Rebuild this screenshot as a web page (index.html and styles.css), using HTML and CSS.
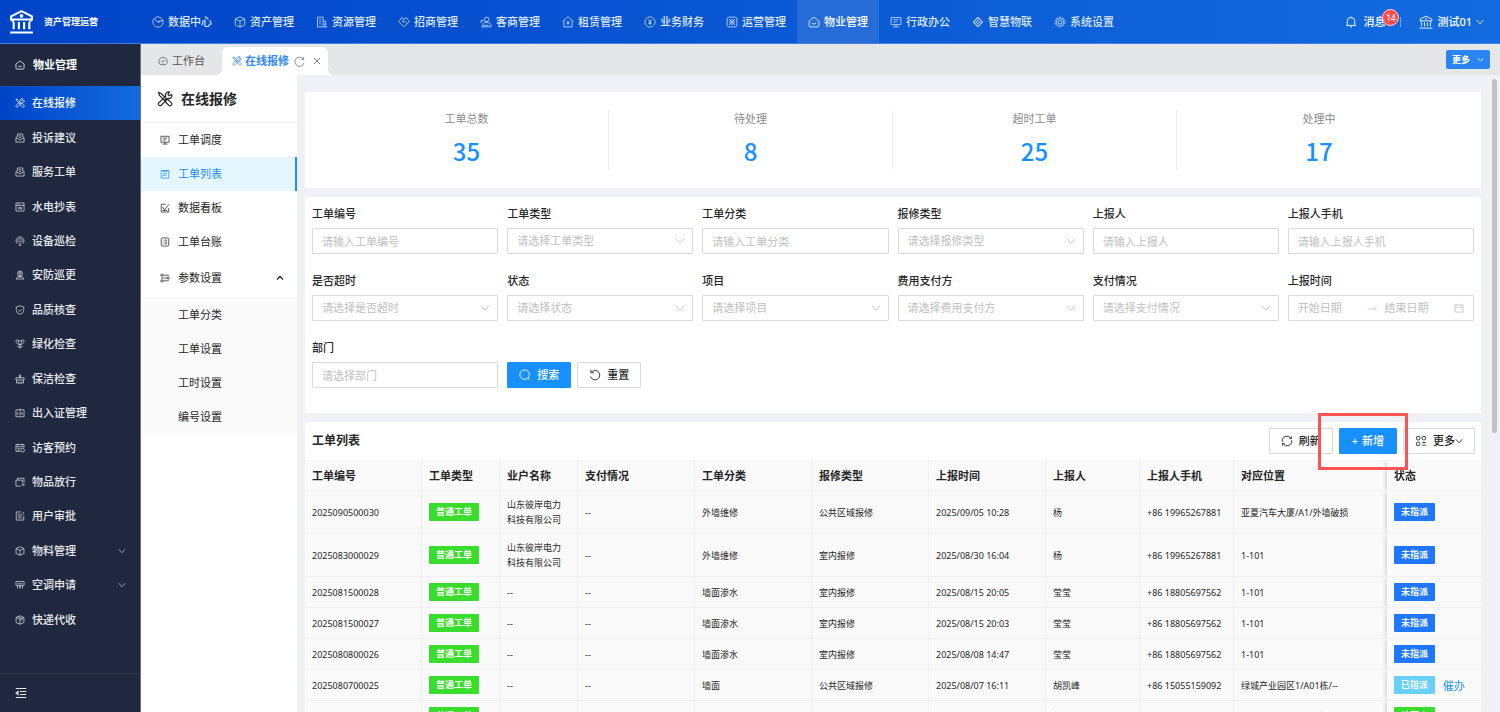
FILE: index.html
```html
<!DOCTYPE html>
<html lang="zh-CN">
<head>
<meta charset="utf-8">
<meta name="viewport" content="width=device-width, initial-scale=1">
<title>资产管理运营 - 在线报修</title>
<link rel="stylesheet" href="styles.css">
</head>
<body>
<svg class="sprite" aria-hidden="true">
  <symbol id="i-bank" viewBox="0 0 24 24"><path d="M12 2 2 7v3h20V7z"/><circle cx="12" cy="6.500" r=".8"/><path d="M3.500 10v2.500M20.500 10v2.500M4.500 12.500v7M9.500 12.500v7M14.500 12.500v7M19.500 12.500v7M1 22.500h22"/></symbol>
  <symbol id="i-pie" viewBox="0 0 16 16"><circle cx="8" cy="8" r="6.800"/><path d="M3 3.500 8 8.500l6.500-3M8 8.500l3-3"/></symbol>
  <symbol id="i-cube" viewBox="0 0 16 16"><path d="M8 1.200 14.300 4v8L8 14.800 1.700 12V4zM1.700 4 8 7l6.300-3M8 7v7.800"/></symbol>
  <symbol id="i-parcel" viewBox="0 0 16 16"><path d="M8 1.200 14.300 4v8L8 14.800 1.700 12V4zM1.700 4 8 7l6.300-3M8 7v7.800M4.800 2.600 11 5.600v3.500"/></symbol>
  <symbol id="i-building" viewBox="0 0 16 16"><path d="M2 14.500v-13h7.500v13M9.500 7H13v7.500M1 14.500h14M4 4.500h3M4 7.500h3M4 10.500h3M11.500 10v2"/></symbol>
  <symbol id="i-tag" viewBox="0 0 16 16"><path d="m8 14.500-7-7L5 2l3 2.500L11 2l4 5.500zM8 4.500 5.500 7 7 8.500l2-1.500 3 3"/></symbol>
  <symbol id="i-client" viewBox="0 0 16 16"><circle cx="9" cy="4.500" r="3"/><path d="M1.500 14.500h13V11L11 8.500H6L3.500 11v1.500h8M1.500 9.500V6H5"/></symbol>
  <symbol id="i-rent" viewBox="0 0 16 16"><path d="M1 7 8 1l7 6M2.500 6v8.500h11V6M6 6.500l2 2 2-2M8 8.500V12M6 9.500h4"/></symbol>
  <symbol id="i-coin" viewBox="0 0 16 16"><circle cx="8" cy="8" r="6.800"/><path d="m5.800 4.500 2.200 3 2.200-3M8 7.500V12M6 8h4M6 10h4"/></symbol>
  <symbol id="i-ops" viewBox="0 0 16 16"><path d="M5 1.500H3L1.500 3v10L3 14.500h10l1.500-1.500V3L13 1.500H5M4 4l8 8M12 4l-8 8"/><circle cx="8" cy="8" r="3"/></symbol>
  <symbol id="i-home" viewBox="0 0 16 16"><path d="M8 1.500 1.500 6.500V13q0 1.500 1.500 1.500h10q1.500 0 1.500-1.500V6.500zM5 9.500q3 3 6 0"/></symbol>
  <symbol id="i-screen" viewBox="0 0 16 16"><path d="M1.500 2h13v9.500h-13zM8 11.500v3M4 14.500h8M4.500 5h7M4.500 8h5"/></symbol>
  <symbol id="i-atom" viewBox="0 0 16 16"><circle cx="8" cy="8" r="2"/><path d="M5 4.500Q8-1 11 4.500M5 11.500Q8 17 11 11.500M4.500 5.500Q-1 8 4.500 10.500M11.500 5.500Q17 8 11.500 10.500"/><circle cx="8" cy="8" r="4.600"/></symbol>
  <symbol id="i-gear" viewBox="0 0 16 16"><circle cx="8" cy="8" r="2.500"/><circle cx="8" cy="8" r="5"/><circle cx="8" cy="8" r="6.700" stroke-dasharray="2.500 1.700"/></symbol>
  <symbol id="i-bell" viewBox="0 0 16 16"><path d="M1.500 12.500h13M3 12.500V7a5 5 0 0 1 10 0v5.500M8 2V.8M6.500 14.500h3"/></symbol>
  <symbol id="i-down" viewBox="0 0 16 16"><path d="m1.500 4.500 6.500 7 6.500-7"/></symbol>
  <symbol id="i-up" viewBox="0 0 16 16"><path d="m2 11 6-6 6 6"/></symbol>
  <symbol id="i-tools" viewBox="0 0 16 16"><path d="m1.500 1.500 2.800 1 5 5-1.800 1.800-5-5zM9 9.500l1.500-1.500 4 4q.8 1.300-.2 2.300t-2.300.2L8.500 11zM14.500 3.500l-2.300 1.300-1.300-1.300L12.500 1Q10 .5 8.800 2.500q-.6 1.200 0 2.500L1.500 12q-.5 1 .2 2t2.300.5L11 7.300q3 .6 3.800-1.600.2-1.200-.3-2.200z"/></symbol>
  <symbol id="i-mail" viewBox="0 0 16 16"><path d="M4 6V1.500h8.500V6M1.500 7.500V14.500h13V7.500L8 11zM1.500 7.500 4 5M14.500 7.500 12.500 5M6 4.500h4M6 7h4"/></symbol>
  <symbol id="i-meter" viewBox="0 0 16 16"><path d="M1.500 1.500h13v13h-13zM1.500 5.500h13M4 3.500h3M5 8v4M8 12V8l2 4V8M12 3.500h.5"/></symbol>
  <symbol id="i-device" viewBox="0 0 16 16"><path d="M4 12.500a6.300 6.300 0 1 1 8 0M5.500 10a3.500 3.500 0 1 1 5 0M8 7v8M6 15h4"/></symbol>
  <symbol id="i-guard" viewBox="0 0 16 16"><circle cx="8" cy="5.500" r="4"/><path d="M5 5h6M8 2v7M1.500 14.500h13L12 11H4zM5 9l3 3 3-3"/></symbol>
  <symbol id="i-shield" viewBox="0 0 16 16"><path d="m8 1.200 6 2v5.300q0 4.500-6 6.500-6-2-6-6.500V3.200zM5 8l2.300 2.200L11 6.500"/></symbol>
  <symbol id="i-flower" viewBox="0 0 16 16"><path d="M8 15.500V9.500M8 9.500Q1.500 8 1.500 3q0-2 2.500-1.500l4 2 4-2q2.500-.5 2.500 1.500 0 5-6.500 6.500zM5.500 2.500V6L8 9.500 10.500 6V2.500M3.500 11.500l4.500 2 4.500-2"/></symbol>
  <symbol id="i-clean" viewBox="0 0 16 16"><path d="M7 1.500h2V6H7zM1.500 6h13v3.500h-13zM2.500 9.500v5h11v-5M6 14.500V12M10 14.500V12"/></symbol>
  <symbol id="i-card" viewBox="0 0 16 16"><path d="M1.500 3h13v11h-13zM8 1v4M4.500 7v4M7 7h2v4H7M11.500 7v4"/></symbol>
  <symbol id="i-visit" viewBox="0 0 16 16"><path d="M14.500 7V2.500h-13v11H8M1.500 6h13M5 1v3M11 1v3M4 9h4M4 11.500h3"/><circle cx="12" cy="11.500" r="3"/></symbol>
  <symbol id="i-goods" viewBox="0 0 16 16"><path d="M4 5V2h10.500v7M1.500 5H12v5M1.500 5v9.500H9M10 12.500h5M13 10.500l2 2-2 2"/></symbol>
  <symbol id="i-audit" viewBox="0 0 16 16"><path d="M10 1.500H2v13h12V7M4.500 5h4M4.500 8h5M4.500 11h7M14.500 1.500 9.500 8"/></symbol>
  <symbol id="i-ac" viewBox="0 0 16 16"><path d="M1.500 2.500h13v6h-13zM4 6h8M4 8.500v5M8 8.500V14M12 8.500v5M6 11h4"/></symbol>
  <symbol id="i-fold" viewBox="0 0 16 16"><path d="M1 2h14M6.500 6H15M6.500 10H15M1 14h14M4 6v4L1.500 8z"/></symbol>
  <symbol id="i-dash" viewBox="0 0 16 16"><path d="M3.500 13.800a6.700 6.700 0 1 1 9 0zM7 12l2-6M4 8h1M11 8h1"/></symbol>
  <symbol id="i-reload" viewBox="0 0 16 16"><path d="M13.500 4.500A6.700 6.700 0 1 0 14.500 10M14 1.500v3.500h-3.500"/></symbol>
  <symbol id="i-close" viewBox="0 0 16 16"><path d="m2 2 12 12M14 2 2 14"/></symbol>
  <symbol id="i-list" viewBox="0 0 16 16"><path d="M2 2.500h12v12H2zM5 1v3h6V1M4.500 7.500h7M4.500 10.500h5"/></symbol>
  <symbol id="i-chart" viewBox="0 0 16 16"><path d="M9 2H2v12.500h12V8M4 6l3 5 7.500-9M4 12h8"/></symbol>
  <symbol id="i-book" viewBox="0 0 16 16"><rect x="2" y="1.500" width="12" height="13" rx="2"/><path d="M7 5h4.500M7 8h4.500M7 11h4.500M4.500 5h.8M4.500 8h.8M4.500 11h.8"/></symbol>
  <symbol id="i-params" viewBox="0 0 16 16"><circle cx="3" cy="3.500" r="1.800"/><circle cx="13" cy="8" r="1.800"/><circle cx="3" cy="12.500" r="1.800"/><path d="M5 3.500h9M1.500 8H11M5 12.500h9"/></symbol>
  <symbol id="i-search" viewBox="0 0 16 16"><circle cx="7.500" cy="7.500" r="6.300"/><path d="m12 12 3 3"/></symbol>
  <symbol id="i-undo" viewBox="0 0 16 16"><path d="M3 4.500A6.300 6.300 0 1 1 2 10M2.500 1v4h4"/></symbol>
  <symbol id="i-sync" viewBox="0 0 16 16"><path d="M1.800 9A6.300 6.300 0 0 1 13 4M14.200 7A6.300 6.300 0 0 1 3 12M11 4.800h3v-3M5 11.200H2v3"/></symbol>
  <symbol id="i-apps" viewBox="0 0 16 16"><circle cx="4.200" cy="4.200" r="2.500"/><circle cx="11.800" cy="4.200" r="2.500"/><circle cx="4.200" cy="11.800" r="2.500"/><path d="M9.500 10h5M9.500 13.500h5"/></symbol>
  <symbol id="i-arrow" viewBox="0 0 16 16"><path d="M1 9.500h14L11 6"/></symbol>
  <symbol id="i-date" viewBox="0 0 16 16"><path d="M1.500 3h13v11.500h-13zM1.500 7h13M5 1v4M11 1v4"/></symbol>
</svg>

<header class="topbar">
  <div class="brand"><svg class="logo"><use href="#i-bank"/></svg><span>资产管理运营</span></div>
  <nav class="topnav">
    <a href="#"><svg><use href="#i-pie"/></svg>数据中心</a>
    <a href="#"><svg><use href="#i-cube"/></svg>资产管理</a>
    <a href="#"><svg><use href="#i-building"/></svg>资源管理</a>
    <a href="#"><svg><use href="#i-tag"/></svg>招商管理</a>
    <a href="#"><svg><use href="#i-client"/></svg>客商管理</a>
    <a href="#"><svg><use href="#i-rent"/></svg>租赁管理</a>
    <a href="#"><svg><use href="#i-coin"/></svg>业务财务</a>
    <a href="#"><svg><use href="#i-ops"/></svg>运营管理</a>
    <a href="#" class="on"><svg><use href="#i-home"/></svg>物业管理</a>
    <a href="#"><svg><use href="#i-screen"/></svg>行政办公</a>
    <a href="#"><svg><use href="#i-atom"/></svg>智慧物联</a>
    <a href="#"><svg><use href="#i-gear"/></svg>系统设置</a>
  </nav>
  <div class="account">
    <button class="message"><svg><use href="#i-bell"/></svg>消息<span class="badge">14</span></button>
    <button class="user"><svg class="user-icon"><use href="#i-bank"/></svg>测试01<svg class="chev"><use href="#i-down"/></svg></button>
  </div>
</header>

<div class="shell">
  <aside class="sidebar">
    <h2><svg><use href="#i-home"/></svg>物业管理</h2>
    <ul class="side-list">
      <li><a href="#" class="on"><svg><use href="#i-tools"/></svg>在线报修</a></li>
      <li><a href="#"><svg><use href="#i-mail"/></svg>投诉建议</a></li>
      <li><a href="#"><svg><use href="#i-mail"/></svg>服务工单</a></li>
      <li><a href="#"><svg><use href="#i-meter"/></svg>水电抄表</a></li>
      <li><a href="#"><svg><use href="#i-device"/></svg>设备巡检</a></li>
      <li><a href="#"><svg><use href="#i-guard"/></svg>安防巡更</a></li>
      <li><a href="#"><svg><use href="#i-shield"/></svg>品质核查</a></li>
      <li><a href="#"><svg><use href="#i-flower"/></svg>绿化检查</a></li>
      <li><a href="#"><svg><use href="#i-clean"/></svg>保洁检查</a></li>
      <li><a href="#"><svg><use href="#i-card"/></svg>出入证管理</a></li>
      <li><a href="#"><svg><use href="#i-visit"/></svg>访客预约</a></li>
      <li><a href="#"><svg><use href="#i-goods"/></svg>物品放行</a></li>
      <li><a href="#"><svg><use href="#i-audit"/></svg>用户审批</a></li>
      <li><a href="#"><svg><use href="#i-cube"/></svg>物料管理<svg class="chev"><use href="#i-down"/></svg></a></li>
      <li><a href="#"><svg><use href="#i-ac"/></svg>空调申请<svg class="chev"><use href="#i-down"/></svg></a></li>
      <li><a href="#"><svg><use href="#i-parcel"/></svg>快递代收</a></li>
    </ul>
    <button class="fold" aria-label="收起菜单"><svg><use href="#i-fold"/></svg></button>
  </aside>

  <div class="workspace">
    <div class="tabs">
      <a href="#" class="tab"><svg><use href="#i-dash"/></svg>工作台</a>
      <div class="tab on"><svg><use href="#i-tools"/></svg><a href="#">在线报修</a>
        <button class="reload" aria-label="重新加载"><svg><use href="#i-reload"/></svg></button>
        <button class="close" aria-label="关闭"><svg><use href="#i-close"/></svg></button>
      </div>
      <button class="tabs-more">更多<svg><use href="#i-down"/></svg></button>
    </div>

    <div class="page">
      <aside class="submenu">
        <h1><svg><use href="#i-tools"/></svg>在线报修</h1>
        <ul>
          <li><a href="#"><svg><use href="#i-screen"/></svg>工单调度</a></li>
          <li><a href="#" class="on"><svg><use href="#i-list"/></svg>工单列表</a></li>
          <li><a href="#"><svg><use href="#i-chart"/></svg>数据看板</a></li>
          <li><a href="#"><svg><use href="#i-book"/></svg>工单台账</a></li>
          <li><a href="#" class="parent"><svg><use href="#i-params"/></svg>参数设置<svg class="chev"><use href="#i-up"/></svg></a>
            <ul class="children">
              <li><a href="#">工单分类</a></li>
              <li><a href="#">工单设置</a></li>
              <li><a href="#">工时设置</a></li>
              <li><a href="#">编号设置</a></li>
            </ul>
          </li>
        </ul>
      </aside>

      <main class="content">
        <section class="card stats">
          <div><p>工单总数</p><strong>35</strong></div>
          <div><p>待处理</p><strong>8</strong></div>
          <div><p>超时工单</p><strong>25</strong></div>
          <div><p>处理中</p><strong>17</strong></div>
        </section>

        <form class="card filters">
          <div class="field"><label for="f1">工单编号</label><input id="f1" placeholder="请输入工单编号"></div>
          <div class="field"><label for="f2">工单类型</label><div class="pick"><select id="f2"><option>请选择工单类型</option></select><svg><use href="#i-down"/></svg></div></div>
          <div class="field"><label for="f3">工单分类</label><input id="f3" placeholder="请输入工单分类"></div>
          <div class="field"><label for="f4">报修类型</label><div class="pick"><select id="f4"><option>请选择报修类型</option></select><svg><use href="#i-down"/></svg></div></div>
          <div class="field"><label for="f5">上报人</label><input id="f5" placeholder="请输入上报人"></div>
          <div class="field"><label for="f6">上报人手机</label><input id="f6" placeholder="请输入上报人手机"></div>
          <div class="field"><label for="f7">是否超时</label><div class="pick"><select id="f7"><option>请选择是否超时</option></select><svg><use href="#i-down"/></svg></div></div>
          <div class="field"><label for="f8">状态</label><div class="pick"><select id="f8"><option>请选择状态</option></select><svg><use href="#i-down"/></svg></div></div>
          <div class="field"><label for="f9">项目</label><div class="pick"><select id="f9"><option>请选择项目</option></select><svg><use href="#i-down"/></svg></div></div>
          <div class="field"><label for="f10">费用支付方</label><div class="pick"><select id="f10"><option>请选择费用支付方</option></select><svg><use href="#i-down"/></svg></div></div>
          <div class="field"><label for="f11">支付情况</label><div class="pick"><select id="f11"><option>请选择支付情况</option></select><svg><use href="#i-down"/></svg></div></div>
          <div class="field"><label for="f12">上报时间</label><div class="range"><input id="f12" placeholder="开始日期"><svg><use href="#i-arrow"/></svg><input aria-label="结束日期" placeholder="结束日期"><svg><use href="#i-date"/></svg></div></div>
          <div class="field"><label for="f13">部门</label><input id="f13" placeholder="请选择部门"></div>
          <div class="actions">
            <button type="button" class="btn primary"><svg><use href="#i-search"/></svg>搜索</button>
            <button type="button" class="btn"><svg><use href="#i-undo"/></svg>重置</button>
          </div>
        </form>

        <section class="card orders">
          <div class="orders-head">
            <h2>工单列表</h2>
            <div class="tools">
              <button class="btn"><svg><use href="#i-sync"/></svg>刷新</button>
              <div class="marked"><button class="btn primary add"><span>+</span>新增</button></div>
              <button class="btn more"><svg><use href="#i-apps"/></svg><span>更多<svg class="chev"><use href="#i-down"/></svg></span></button>
            </div>
          </div>
          <table>
            <colgroup><col class="w-l"><col class="w-s"><col class="w-s"><col class="w-l"><col class="w-l"><col class="w-l"><col class="w-l"><col class="w-m"><col class="w-m"><col><col class="w-m"></colgroup>
            <thead><tr><th>工单编号</th><th>工单类型</th><th>业户名称</th><th>支付情况</th><th>工单分类</th><th>报修类型</th><th>上报时间</th><th>上报人</th><th>上报人手机</th><th>对应位置</th><th>状态</th></tr></thead>
            <tbody>
              <tr><td>2025090500030</td><td><span class="tag green">普通工单</span></td><td class="wrap">山东彼岸电力科技有限公司</td><td>--</td><td>外墙维修</td><td>公共区域报修</td><td>2025/09/05 10:28</td><td>杨</td><td>+86 19965267881</td><td>亚夏汽车大厦/A1/外墙破损</td><td><span class="tag blue">未指派</span></td></tr>
              <tr><td>2025083000029</td><td><span class="tag green">普通工单</span></td><td class="wrap">山东彼岸电力科技有限公司</td><td>--</td><td>外墙维修</td><td>室内报修</td><td>2025/08/30 16:04</td><td>杨</td><td>+86 19965267881</td><td>1-101</td><td><span class="tag blue">未指派</span></td></tr>
              <tr><td>2025081500028</td><td><span class="tag green">普通工单</span></td><td>--</td><td>--</td><td>墙面渗水</td><td>室内报修</td><td>2025/08/15 20:05</td><td>莹莹</td><td>+86 18805697562</td><td>1-101</td><td><span class="tag blue">未指派</span></td></tr>
              <tr><td>2025081500027</td><td><span class="tag green">普通工单</span></td><td>--</td><td>--</td><td>墙面渗水</td><td>室内报修</td><td>2025/08/15 20:03</td><td>莹莹</td><td>+86 18805697562</td><td>1-101</td><td><span class="tag blue">未指派</span></td></tr>
              <tr><td>2025080800026</td><td><span class="tag green">普通工单</span></td><td>--</td><td>--</td><td>墙面渗水</td><td>室内报修</td><td>2025/08/08 14:47</td><td>莹莹</td><td>+86 18805697562</td><td>1-101</td><td><span class="tag blue">未指派</span></td></tr>
              <tr><td>2025080700025</td><td><span class="tag green">普通工单</span></td><td>--</td><td>--</td><td>墙面</td><td>公共区域报修</td><td>2025/08/07 16:11</td><td>胡凯峰</td><td>+86 15055159092</td><td>绿城产业园区1/A01栋/--</td><td><span class="tag cyan">已指派</span><a href="#" class="urge">催办</a></td></tr>
              <tr><td>2025080700024</td><td><span class="tag green">普通工单</span></td><td>--</td><td>--</td><td>墙面</td><td>公共区域报修</td><td>2025/08/07 16:00</td><td>胡凯峰</td><td>+86 15055159092</td><td>绿城小区A01/1/03栋/1/130120130120</td><td><span class="tag green">处理中</span></td></tr>
            </tbody>
          </table>
        </section>
      </main>
      <div class="rail" aria-hidden="true"><div class="thumb"></div></div>
    </div>
  </div>
</div>
</body>
</html>
```
FILE: styles.css
```css
* { box-sizing: border-box; }
body {
  margin: 0;
  height: 100vh;
  display: flex;
  flex-direction: column;
  overflow: hidden;
  font: 11px/16px "Noto Sans", "Noto Sans CJK SC", sans-serif;
  color: #262626;
  background: #eff1f6;
}
h1, h2, p, ul { margin: 0; padding: 0; }
ul { list-style: none; }
a { color: inherit; text-decoration: none; }
button, input, select { font: inherit; color: inherit; margin: 0; }
button { border: 0; background: none; padding: 0; display: flex; align-items: center; }
svg { width: 10px; height: 10px; flex: none; fill: none; stroke: currentColor; stroke-width: 1.2; }
.sprite { position: absolute; width: 0; height: 0; }

/* top bar */
.topbar {
  height: 44px;
  flex: none;
  display: flex;
  color: #fff;
  border-bottom: 1px solid #3f82e4;
  background: linear-gradient(90deg, #0044c8, #136bdf);
}
.brand { width: 141px; flex: none; display: flex; align-items: center; gap: 10px; padding-left: 9px; font-size: 9px; font-weight: 700; }
.brand .logo { width: 25px; height: 25px; stroke-width: 2; }
.topnav { display: flex; color: #dce8fb; font-weight: 500; }
.topnav a { display: flex; align-items: center; gap: 4px; padding: 0 11px; white-space: nowrap; }
.topnav svg { width: 12px; height: 12px; stroke-width: 1; }
.topnav .on { color: #fff; background: #266cd8; }
.account { margin-left: auto; display: flex; align-items: center; padding-right: 16px; font-weight: 500; }
.message { position: relative; gap: 6px; padding-right: 16px; }
.message > svg { width: 12px; height: 12px; }
.message::after { content: ""; position: absolute; right: 0; top: 3px; width: 1px; height: 10px; background: #6fa2ea; }
.badge {
  position: absolute;
  left: 37px;
  top: -5px;
  width: 17px;
  height: 17px;
  border: 1px solid #ffd0d0;
  border-radius: 50%;
  background: #ff4d4f;
  font-size: 8px;
  line-height: 15px;
  text-align: center;
}
.user { gap: 4px; padding-left: 18px; }
.user .user-icon { width: 14px; height: 14px; stroke-width: 1.5; }
.user .chev { width: 8px; height: 8px; stroke-width: 1.8; }

/* dark sidebar */
.shell { flex: 1; display: flex; min-height: 0; }
.sidebar {
  width: 141px;
  flex: none;
  display: flex;
  flex-direction: column;
  color: #e6e8ed;
  background: #20283f;
  border-right: 1px solid #6b7080;
}
.sidebar h2 { height: 42px; display: flex; align-items: center; gap: 8px; padding-left: 15px; font-size: 11px; color: #fff; }
.side-list { flex: 1; display: grid; grid-auto-rows: 1fr; padding-bottom: 36px; font-weight: 500; }
.side-list a { height: 100%; display: flex; align-items: center; gap: 7px; padding: 0 14px 0 15px; }
.side-list svg { stroke-width: 1.1; }
.side-list .on { color: #fff; background: linear-gradient(90deg, #0044c8, #136bdf); }
.side-list .chev { width: 8px; height: 8px; margin-left: auto; stroke-width: 1.8; color: #a6a9b2; }
.fold { height: 39px; padding-left: 15px; border-top: 1px solid #30353f; }
.fold svg { width: 12px; height: 12px; stroke-width: 1.5; }

/* page tabs */
.workspace { flex: 1; min-width: 0; display: flex; flex-direction: column; }
.tabs { height: 31px; flex: none; display: flex; align-items: flex-end; padding-right: 10px; background: #e4e6e8; color: #555; }
.tab { height: 28px; display: flex; align-items: center; gap: 4px; padding: 0 17px; }
.tab.on {
  position: relative;
  gap: 3px;
  padding: 0 7px 0 10px;
  border-radius: 6px 6px 0 0;
  color: #3388f2;
  font-weight: 700;
  background: #fff;
}
.tab.on::before, .tab.on::after { content: ""; position: absolute; bottom: 0; width: 6px; height: 6px; }
.tab.on::before { left: -6px; background: radial-gradient(circle at 0 0, transparent 6px, #fff 6px); }
.tab.on::after { right: -6px; background: radial-gradient(circle at 100% 0, transparent 6px, #fff 6px); }
.tab button { color: #777; }
.reload { padding: 0 5px 0 2px; }
.reload svg { width: 11px; height: 11px; }
.close svg { width: 8px; height: 8px; stroke-width: 1.8; }
.tabs-more {
  align-self: center;
  margin-left: auto;
  height: 19px;
  gap: 7px;
  padding: 0 6px;
  border-radius: 2px;
  background: #2b84f4;
  color: #fff;
  font-size: 9px;
  font-weight: 700;
}
.tabs-more svg { width: 7px; height: 7px; stroke-width: 1.8; }

/* secondary menu */
.page { flex: 1; min-height: 0; display: flex; }
.submenu { width: 156px; flex: none; background: #fff; }
.submenu h1 { height: 48px; display: flex; align-items: center; gap: 8px; padding-left: 16px; border-bottom: 1px solid #f0f0f0; font-size: 14px; }
.submenu h1 svg { width: 16px; height: 16px; stroke-width: 1.2; }
.submenu a { height: 34px; display: flex; align-items: center; gap: 8px; padding: 0 14px 0 19px; border-right: 2px solid transparent; }
.submenu .on { color: #1890ff; background: #e6f6ff; border-color: #1890ff; }
.submenu .parent { height: 38px; padding-right: 11px; }
.submenu .parent .chev { width: 8px; height: 8px; margin-left: auto; stroke-width: 2.5; }
.children { padding: 1px 0; background: #fafafa; }
.submenu .children a { padding-left: 37px; }

/* content */
.content {
  flex: 1;
  min-width: 0;
  overflow: auto;
  scrollbar-width: none;
  display: flex;
  flex-direction: column;
  gap: 9px;
  padding: 17px 0 0 8px;
}
.rail { flex: none; padding: 4px 3px 0 11px; }
.thumb { width: 5px; height: 56%; border-radius: 3px; background: #c1c1c1; }
.card { flex: none; background: #fff; }

.stats { display: grid; grid-template-columns: repeat(4, 1fr); padding: 18px 20px; }
.stats div { height: 60px; text-align: center; border-right: 1px solid #eee; }
.stats div:last-child { border: 0; }
.stats p { padding-top: 1px; color: #8c8c8c; }
.stats strong { display: block; margin-top: 8px; font: 500 24px/32px "Noto Sans CJK SC", "Noto Sans", sans-serif; color: #1890ff; }

.filters { display: grid; grid-template-columns: repeat(6, minmax(0, 1fr)); gap: 19px 9px; padding: 9px 7px 25px; }
.field { display: flex; flex-direction: column; gap: 6px; }
.field label { font-weight: 500; }
.field > input, .pick select, .range { width: 100%; height: 26px; padding: 0 9px; border: 1px solid #d9d9d9; border-radius: 1px; background: #fff; }
.field input::placeholder { color: #bfbfbf; }
.pick { position: relative; }
.pick select { display: block; appearance: none; color: #bfbfbf; }
.pick svg { position: absolute; right: 8px; top: 8px; color: #bfbfbf; stroke-width: 1.4; }
.range { display: flex; align-items: center; color: #bfbfbf; }
.range input { flex: 1; min-width: 0; width: 0; padding: 0; border: 0; }
.range svg { margin-right: 7px; }
.range svg:last-child { margin: 0; }
.actions { display: flex; align-items: flex-end; gap: 6px; }
.btn {
  height: 26px;
  gap: 6px;
  padding: 0 11px;
  border: 1px solid #d9d9d9;
  border-radius: 1px;
  background: #fff;
  font-weight: 500;
  white-space: nowrap;
}
.btn svg { width: 12px; height: 12px; }
.btn.primary { color: #fff; background: #1890ff; border-color: #1890ff; }

.orders-head { display: flex; align-items: center; justify-content: space-between; padding: 6px 6px 6px 7px; }
.orders-head h2 { font-size: 12px; }
.tools { display: flex; gap: 6px; }
.btn.add { gap: 4px; padding: 0 12px; }
.btn.more svg.chev { width: 8px; height: 8px; stroke-width: 1.8; }
.marked { position: relative; z-index: 2; }
.marked::after { content: ""; position: absolute; inset: -15px -11px -16px -21px; border: 3px solid #fb5454; pointer-events: none; }

table { width: 100%; table-layout: fixed; border-collapse: separate; border-spacing: 0; font-size: 9px; line-height: 15px; background: #fafafa; }
.w-l { width: 117px; }
.w-m { width: 94px; }
.w-s { width: 78px; }
th, td { padding: 6px 7px; text-align: left; white-space: nowrap; border-right: 1px solid #f0f0f0; border-bottom: 1px solid #f0f0f0; }
th { font-size: 11px; line-height: 17px; font-weight: 700; border-top: 1px solid #f5f5f5; }
td { height: 31px; }
td.wrap { white-space: normal; padding-right: 14px; }
th:last-child, td:last-child { position: sticky; right: 0; background: #fafafa; border-right: 0; box-shadow: -3px 0 4px -1px #dcdcdc; clip-path: inset(0 0 0 -10px); }
.tag { display: inline-block; height: 18px; padding: 0 7px; border-radius: 1px; color: #fff; font-weight: 700; line-height: 18px; vertical-align: middle; }
.green { background: #39dd2b; }
.blue { background: #1f76ff; }
.cyan { background: #69d0fb; }
.urge { margin-left: 8px; color: #1890ff; font-size: 11px; vertical-align: middle; }
```
